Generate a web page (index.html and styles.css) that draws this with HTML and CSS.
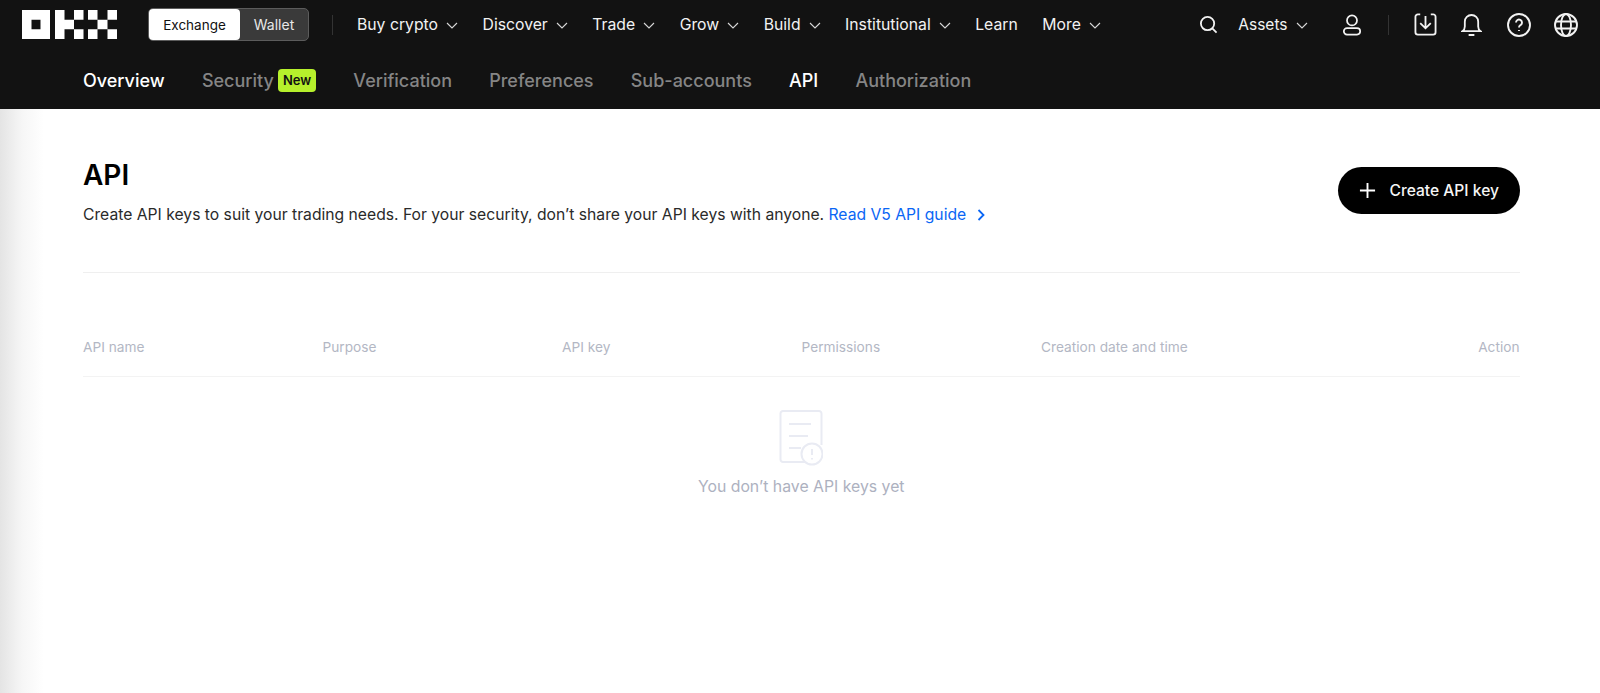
FILE: index.html
```html
<!DOCTYPE html>
<html lang="en">
<head>
<meta charset="utf-8">
<title>API</title>
<link rel="stylesheet" href="styles.css">
</head>
<body>
<header class="header">
  <div class="topbar">
    <svg class="logo" viewBox="0 0 95 29" fill="#fff">
      <path fill-rule="evenodd" d="M0 0h28v29H0zM9.500 9.700v9.600h9v-9.600z"/>
      <path d="M33 0h9.500v29H33zM42.500 9.700H52v9.600h-9.500zM52 0h9.500v9.700H52zM52 19.300h9.500V29H52z"/>
      <path d="M66 0h9.500v9.700H66zM66 19.300h9.500V29H66zM75.500 9.700H85.500v9.600H75.500zM85.500 0H95v9.700h-9.500zM85.500 19.300H95V29h-9.500z"/>
    </svg>
    <div class="switch">
      <span class="switch-on">Exchange</span>
      <span class="switch-off">Wallet</span>
    </div>
    <span class="vline vline-nav"></span>
    <nav class="nav">
      <a class="nav-item">Buy crypto <svg class="chev" viewBox="0 0 12 12"><path d="M1 4l5 5 5-5"/></svg></a>
      <a class="nav-item">Discover <svg class="chev" viewBox="0 0 12 12"><path d="M1 4l5 5 5-5"/></svg></a>
      <a class="nav-item">Trade <svg class="chev" viewBox="0 0 12 12"><path d="M1 4l5 5 5-5"/></svg></a>
      <a class="nav-item">Grow <svg class="chev" viewBox="0 0 12 12"><path d="M1 4l5 5 5-5"/></svg></a>
      <a class="nav-item">Build <svg class="chev" viewBox="0 0 12 12"><path d="M1 4l5 5 5-5"/></svg></a>
      <a class="nav-item">Institutional <svg class="chev" viewBox="0 0 12 12"><path d="M1 4l5 5 5-5"/></svg></a>
      <a class="nav-item">Learn</a>
      <a class="nav-item">More <svg class="chev" viewBox="0 0 12 12"><path d="M1 4l5 5 5-5"/></svg></a>
    </nav>
    <div class="tools">
      <svg class="ico ico-search" viewBox="0 0 20 20"><circle cx="9" cy="9" r="7"/><path d="M14 14l4.500 4.500"/></svg>
      <a class="nav-item assets">Assets <svg class="chev" viewBox="0 0 12 12"><path d="M1 4l5 5 5-5"/></svg></a>
      <svg class="ico ico-user" viewBox="0 0 22 24"><circle cx="11" cy="7" r="5.500"/><rect x="2" y="15.500" width="18" height="7" rx="3.500"/></svg>
      <span class="vline vline-tools"></span>
      <svg class="ico ico-dl" viewBox="0 0 24 24"><path d="M6.500 1.500H4A2.500 2.500 0 0 0 1.500 4v16A2.500 2.500 0 0 0 4 22.500h16a2.500 2.500 0 0 0 2.500-2.500V4A2.500 2.500 0 0 0 20 1.500h-2.500M12 3v13M6.500 10.500l5.500 5.500 5.500-5.500"/></svg>
      <svg class="ico ico-bell" viewBox="0 0 22 24"><path d="M1.500 18.500c1.500-1 2.500-2.500 2.500-5V8.500a7 7 0 0 1 14 0v5c0 2.500 1 4 2.500 5zM8 22.500h6"/></svg>
      <svg class="ico ico-help" viewBox="0 0 24 24"><circle cx="12" cy="12" r="11"/><path d="M9 9.500a3 3 0 1 1 4.800 2.400c-1 .8-1.800 1.300-1.800 2.600M12 17v1"/></svg>
      <svg class="ico ico-globe" viewBox="0 0 24 24"><circle cx="12" cy="12" r="11"/><ellipse cx="12" cy="12" rx="5" ry="11"/><path d="M1.500 8.500h21M1.500 15.500h21"/></svg>
    </div>
  </div>
  <nav class="subnav">
    <a class="sub-item sub-active">Overview</a>
    <a class="sub-item sub-badge">Security <span class="badge">New</span></a>
    <a class="sub-item">Verification</a>
    <a class="sub-item">Preferences</a>
    <a class="sub-item">Sub-accounts</a>
    <a class="sub-item sub-active">API</a>
    <a class="sub-item">Authorization</a>
  </nav>
</header>
<main class="main">
  <section class="head">
    <div class="head-text">
      <h1 class="title">API</h1>
      <p class="desc">Create API keys to suit your trading needs. For your security, don’t share your API keys with anyone. <a class="link">Read V5 API guide <svg class="link-chev" viewBox="0 0 10 14"><path d="M2.500 2l5 5-5 5"/></svg></a></p>
    </div>
    <button class="create"><svg class="plus" viewBox="0 0 18 18"><path d="M9 1v16M1 9h16"/></svg>Create API key</button>
  </section>
  <div class="table-head">
    <span class="col">API name</span>
    <span class="col">Purpose</span>
    <span class="col">API key</span>
    <span class="col">Permissions</span>
    <span class="col col-wide">Creation date and time</span>
    <span class="col col-action">Action</span>
  </div>
  <div class="empty">
    <svg class="empty-ico" viewBox="0 0 44 56">
      <path d="M26 52H4a2.500 2.500 0 0 1-2.500-2.500v-46A2.500 2.500 0 0 1 4 1h36a2.500 2.500 0 0 1 2.500 2.500V35"/>
      <path d="M10 14h22M10 26h19M10 38h12"/>
      <circle cx="33" cy="44" r="10.500"/>
      <path d="M33 39v6M33 48v1.500"/>
    </svg>
    <p class="empty-text">You don’t have API keys yet</p>
  </div>
</main>
</body>
</html>
```
FILE: styles.css
```css
* { box-sizing: border-box; }
html, body { margin: 0; padding: 0; }
body {
  height: 693px;
  overflow: hidden;
  background: linear-gradient(90deg, #e4e4e4 0, #f6f6f6 22px, #fff 44px);
  font-family: Inter, "Liberation Sans", sans-serif;
  color: #111;
}
.header { background: #121212; height: 109px; }
.topbar { display: flex; align-items: center; height: 49px; padding-left: 22px; }
.logo { width: 95px; height: 29px; flex: none; }
.switch {
  display: flex;
  margin-left: 31px;
  width: 161px;
  height: 33px;
  background: #3a3a3a;
  border: 1px solid #5c5c5c;
  border-radius: 5px;
  font-size: 14px;
}
.switch-on {
  width: 91px;
  background: #fff;
  color: #111;
  font-size: 13.500px;
  border-radius: 4px;
  display: flex;
  align-items: center;
  justify-content: center;
}
.switch-off { flex: 1; color: #e8e8e8; display: flex; align-items: center; justify-content: center; }
.vline { display: block; width: 1px; height: 20px; background: #333; flex: none; }
.vline-nav { margin-left: 23px; }
.nav { display: flex; margin-left: 24px; gap: 24.500px; }
.nav-item { display: flex; align-items: center; gap: 8px; color: #f2f2f2; font-size: 15.750px; white-space: nowrap; }
.chev { width: 12px; height: 12px; fill: none; stroke: #d8d8d8; stroke-width: 1.100; }
.tools { display: flex; align-items: center; margin-left: auto; padding-right: 22px; }
.ico { fill: none; stroke: #f2f2f2; stroke-width: 1.900; flex: none; }
.ico-search { width: 19px; height: 19px; }
.assets { margin-left: 20px; font-size: 15.500px; }
.ico-user { width: 20px; height: 24px; margin-left: 34.500px; }
.vline-tools { margin-left: 26px; }
.ico-dl { width: 23px; height: 23px; margin-left: 25px; }
.ico-bell { width: 21px; height: 24px; margin-left: 24px; }
.ico-help { width: 24px; height: 24px; margin-left: 25px; }
.ico-globe { width: 24px; height: 24px; margin-left: 23px; }
.subnav { display: flex; align-items: center; height: 60px; padding: 2px 0 0 83px; gap: 37.200px; }
.sub-item { font-size: 18px; color: #858585; font-weight: 450; white-space: nowrap; display: flex; align-items: center; }
.sub-active { color: #fff; }
.badge {
  margin-left: 4px;
  background: #b6f02c;
  color: #111;
  font-size: 13px;
  font-weight: 600;
  padding: 0 5px;
  height: 23px;
  line-height: 23px;
  border-radius: 4px;
}
.main { padding: 0 80.500px 0 83px; }
.head {
  display: flex;
  justify-content: space-between;
  height: 164px;
  padding-top: 49px;
  border-bottom: 1px solid #efefef;
}
.title { margin: 0; font-size: 28px; line-height: 34px; font-weight: 600; color: #000; }
.desc { margin: 12px 0 0; font-size: 15.700px; line-height: 22px; color: #2a2a2a; }
.link { color: #0a66f5; }
.link-chev { width: 10px; height: 14px; margin-left: 5px; vertical-align: -2px; fill: none; stroke: #0a66f5; stroke-width: 1.800; }
.create {
  display: flex;
  align-items: center;
  height: 47px;
  width: 182px;
  margin-top: 9px;
  padding: 0 0 0 21px;
  gap: 14px;
  background: #000;
  border: 0;
  border-radius: 24px;
  color: #f5f5f5;
  font: 500 15.600px Inter, "Liberation Sans", sans-serif;
}
.plus { width: 17px; height: 17px; fill: none; stroke: #fff; stroke-width: 2; flex: none; }
.table-head {
  display: grid;
  grid-template-columns: 239.500px 239.500px 239.500px 239.500px 1fr 100px;
  align-items: center;
  height: 104px;
  padding-top: 58px;
  padding-bottom: 14px;
  border-bottom: 1px solid #f3f3f3;
  font-size: 13.700px;
  color: #b3b7c4;
}
.col-action { text-align: right; }
.empty { display: flex; flex-direction: column; align-items: center; padding-top: 33px; }
.empty-ico { width: 44px; height: 56px; fill: none; stroke: #e9ebf3; stroke-width: 2; display: block; }
.empty-text { margin: 10px 0 0; font-size: 15.800px; line-height: 22px; color: #adb1bf; }
```
